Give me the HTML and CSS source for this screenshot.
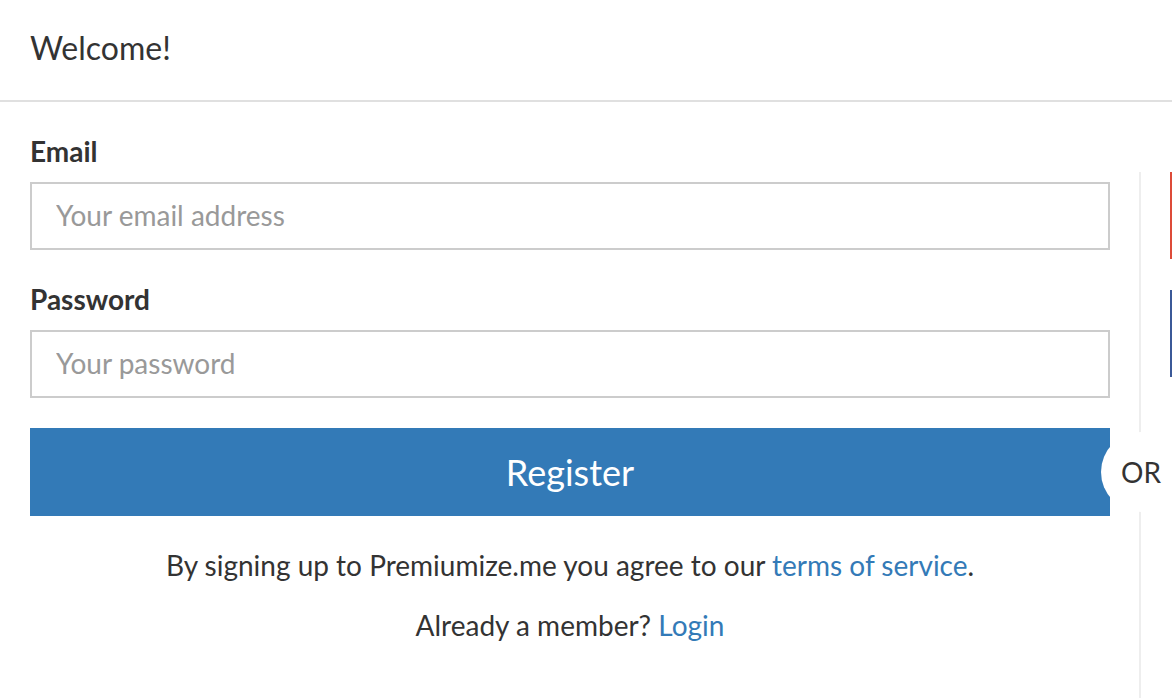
FILE: index.html
```html
<!DOCTYPE html>
<html>
<head>
<meta charset="utf-8">
<link rel="stylesheet" href="styles.css">
</head>
<body>
<div class="modal">
  <div class="modal-header">
    <h4 class="modal-title">Welcome!</h4>
  </div>
  <div class="modal-body">
    <div class="col-form">
      <form class="form">
        <div class="form-group">
          <label class="label">Email</label>
          <input class="input" type="email" placeholder="Your email address">
        </div>
        <div class="form-group">
          <label class="label">Password</label>
          <input class="input" type="password" placeholder="Your password">
        </div>
        <button class="btn-register" type="button">Register</button>
      </form>
      <p class="note">By signing up to Premiumize.me you agree to our <a class="link" href="#">terms of service</a>.</p>
      <p class="note">Already a member? <a class="link" href="#">Login</a></p>
    </div>
    <div class="col-divider">
      <div class="divider-line"></div>
      <div class="or-badge">OR</div>
    </div>
    <div class="col-social">
      <div class="social social-google"></div>
      <div class="social social-facebook"></div>
    </div>
  </div>
</div>
</body>
</html>
```
FILE: styles.css
```css
* { box-sizing: border-box; }
html, body {
  margin: 0;
  padding: 0;
  background: #fff;
  overflow: hidden;
}
body {
  font-family: Lato, "Open Sans", sans-serif;
  color: #333;
  font-size: 28px;
  line-height: 40px;
  width: 1172px;
  height: 698px;
}
.modal {
  width: 1172px;
  height: 698px;
  overflow: hidden;
  display: flex;
  flex-direction: column;
}
.modal-header {
  flex: none;
  padding: 28px 30px 0 30px;
  height: 102px;
  border-bottom: 2px solid #e0e0e0;
}
.modal-title {
  margin: 0;
  font-size: 32px;
  font-weight: 400;
  line-height: 40px;
}
.modal-body {
  flex: 1;
  min-height: 0;
  display: flex;
  padding: 30px 0 0 30px;
}
.col-form {
  width: 1080px;
  flex: none;
}
.form-group {
  margin-bottom: 30px;
}
.label {
  display: block;
  font-weight: 700;
  margin-bottom: 12px;
  line-height: 38px;
}
.input {
  display: block;
  width: 100%;
  height: 68px;
  border: 2px solid #ccc;
  border-radius: 0;
  padding: 0 24px 2px 24px;
  font-family: Lato, sans-serif;
  font-size: 28px;
  color: #333;
  outline: none;
}
.input::placeholder {
  color: #999;
}
.btn-register {
  display: block;
  width: 100%;
  height: 88px;
  border: 0;
  background: #337ab7;
  color: #fff;
  font-family: Lato, sans-serif;
  font-size: 36px;
  margin: 0 0 29px 0;
  padding: 0;
}
.note {
  margin: 0 0 20px 0;
  text-align: center;
}
.link {
  color: #337ab7;
  text-decoration: none;
}
.col-divider {
  position: relative;
  width: 60px;
  flex: none;
  display: flex;
  justify-content: center;
  padding-top: 40px;
}
.divider-line {
  width: 2px;
  height: 100%;
  background: #eeeeee;
}
.or-badge {
  position: absolute;
  top: 300px;
  left: -9px;
  width: 80px;
  height: 80px;
  border-radius: 50%;
  background: #fff;
  display: flex;
  align-items: center;
  justify-content: center;
  font-size: 28px;
}
.col-social {
  flex: 1;
  min-width: 0;
  padding-top: 40px;
  display: flex;
  flex-direction: column;
  gap: 31px;
}
.social {
  width: 100%;
  height: 87px;
}
.social-google { background: #dd4b39; }
.social-facebook { background: #3b5998; }
```
